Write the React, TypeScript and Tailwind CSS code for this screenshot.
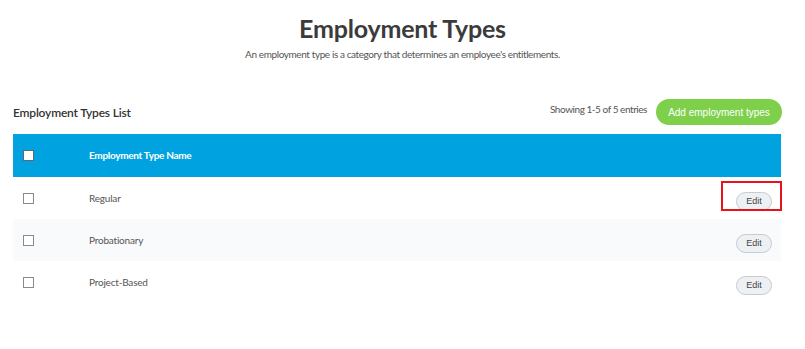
import React from 'react';

const rows = ['Regular', 'Probationary', 'Project-Based'];

const Checkbox = ({ header }: { header?: boolean }) => (
  <span
    className={
      header
        ? 'block w-[11px] h-[11px] bg-white border border-[#5a6b78]'
        : 'block w-[11px] h-[11px] bg-white border border-[#8a8a8a]'
    }
  />
);

const App: React.FC = () => {
  return (
    <div className="w-[805px] h-[349px] bg-white font-['Lato',sans-serif] text-[#444]">
      <div className="flex flex-col items-center pt-[12px]">
        <h1 className="text-[25px] leading-[32px] font-bold text-[#3b3b3b] tracking-[-0.2px]">Employment Types</h1>
        <p className="mt-[3px] text-[10px] leading-[14px] text-[#555] tracking-[-0.4px]">
          An employment type is a category that determines an employee's entitlements.
        </p>
      </div>

      <div className="ml-[13px] w-[768px] mt-[38px]">
        <div className="flex items-center justify-between h-[26px]">
          <h2 className="text-[12px] font-semibold text-[#333] mt-[2px] tracking-[-0.2px]">Employment Types List</h2>
          <div className="flex items-center gap-[9px] -mr-[1px]">
            <span className="text-[10px] text-[#555] -mt-[5px] tracking-[-0.45px]">Showing 1-5 of 5 entries</span>
            <button className="h-[26px] w-[126px] rounded-full bg-[#7ed04b] text-white text-[10px] font-['Liberation_Sans',Arial,sans-serif]">
              Add employment types
            </button>
          </div>
        </div>

        <div className="mt-[9px]">
          <div className="flex items-center h-[43px] bg-[#00a3e0] text-white">
            <div className="w-[76px] pl-[10px]">
              <Checkbox header />
            </div>
            <span className="text-[10px] font-bold tracking-[-0.3px]">Employment Type Name</span>
          </div>
          {rows.map((name, i) => (
            <div
              key={name}
              className={
                i % 2 === 1
                  ? 'flex items-center h-[42px] bg-[#f9fafb]'
                  : 'flex items-center h-[42px] bg-white'
              }
            >
              <div className="w-[76px] pl-[10px]">
                <Checkbox />
              </div>
              <span className="flex-1 text-[10px] text-[#555] tracking-[-0.2px]">{name}</span>
              <div className="relative mr-[9px]">
                <button className="w-[36px] h-[19px] rounded-full bg-[#eef1f4] border border-[#c6cbd0] text-[9px] text-[#444] font-['Liberation_Sans',Arial,sans-serif] leading-none">
                  Edit
                </button>
                {i === 0 && (
                  <span className="absolute left-[-15px] top-[-5px] w-[61px] h-[30px] border-2 border-[#e8121b]" />
                )}
              </div>
            </div>
          ))}
        </div>
      </div>
    </div>
  );
};

export default App;
